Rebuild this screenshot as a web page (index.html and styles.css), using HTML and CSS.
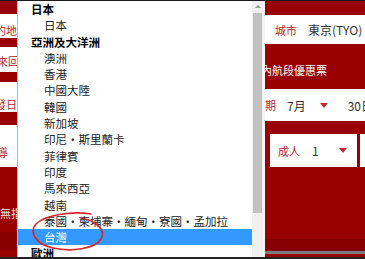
FILE: index.html
```html
<!DOCTYPE html>
<html lang="zh-Hant">
<head>
  <meta charset="UTF-8">
  <title>選擇目的地</title>
  <meta name="viewport" content="width=device-width, initial-scale=1">
  <link rel="stylesheet" href="styles.css">
</head>
<body>

  <div class="screen">

    <div class="side-left">
      <div class="tab tab-a"><span class="tab-text right">目的地</span></div>
      <div class="tab tab-b"><span class="tab-text shift">來回</span></div>
      <div class="tab tab-c"><span class="tab-text right">出發日</span></div>
      <div class="tab tab-d"><span class="tab-text shift">導</span></div>
      <div class="note">無指定</div>
      <div class="band"></div>
    </div>

    <div class="dropdown">
      <ul class="options">
        <li class="group">日本</li>
        <li>日本</li>
        <li class="group">亞洲及大洋洲</li>
        <li>澳洲</li>
        <li>香港</li>
        <li>中國大陸</li>
        <li>韓國</li>
        <li>新加坡</li>
        <li>印尼・斯里蘭卡</li>
        <li>菲律賓</li>
        <li>印度</li>
        <li>馬來西亞</li>
        <li>越南</li>
        <li>泰國・柬埔寨・緬甸・寮國・孟加拉</li>
        <li class="selected">台灣</li>
        <li class="group">歐洲</li>
      </ul>

      <div class="scrollbar">
        <div class="arrow-up"></div>
        <div class="thumb"></div>
      </div>

      <svg class="circle-mark" width="74" height="42" viewBox="0 0 74 42">
        <path d="M60 3 C40 0 14 4 5 13 C-2 21 4 33 22 37 C40 41 64 38 70 28 C75 19 66 10 50 7" fill="none" stroke="#d42a2e" stroke-width="1.7" stroke-linecap="round"/>
      </svg>
    </div>

    <div class="side-right">
      <div class="field field-city">
        <span class="label">城市</span>
        <span class="value">東京(TYO)</span>
      </div>

      <p class="promo">內航段優惠票</p>

      <div class="field field-date">
        <span class="label cut">日期</span>
        <span class="value">7月</span>
        <span class="caret"></span>
        <span class="value day">30日</span>
      </div>

      <div class="field-row">
        <div class="field field-pax">
          <span class="label">成人</span>
          <span class="value">1</span>
          <span class="caret"></span>
        </div>
        <div class="field field-next"></div>
      </div>

      <div class="band"></div>
      <div class="edge"></div>
    </div>

  </div>

</body>
</html>
```

FILE: styles.css
```css
html, body {
  margin: 0;
  padding: 0;
}

body {
  width: 365px;
  height: 259px;
  overflow: hidden;
  background: #990000;
  font-family: "Noto Sans CJK TC", "Liberation Sans", sans-serif;
}

.screen {
  display: flex;
  height: 259px;
  box-sizing: border-box;
  border-top: 1px solid #1b1b1b;
  border-bottom: 2px solid #222;
  position: relative;
}

/* left strip of the booking form, mostly hidden under the list */
.side-left {
  width: 17px;
  flex: none;
  background: #990000;
  display: flex;
  flex-direction: column;
  overflow: hidden;
}

.tab {
  background: #fff;
  overflow: hidden;
  white-space: nowrap;
  font-size: 11px;
  color: #b3262b;
  display: flex;
  align-items: flex-end;
}

.tab-text {
  display: block;
  width: 17px;
  line-height: 14px;
}

.tab-text.right {
  direction: rtl;
  text-align: left;
}

.tab-text.shift {
  text-indent: -3px;
}

.tab-a { margin-top: 13px; height: 24px; padding-bottom: 1px; box-sizing: border-box; }
.tab-b { margin-top: 9px; height: 25px; padding-bottom: 4px; box-sizing: border-box; }
.tab-c { margin-top: 10px; height: 30px; padding-bottom: 1px; box-sizing: border-box; }
.tab-d { margin-top: 13px; height: 42px; padding-bottom: 8px; box-sizing: border-box; }

.note {
  margin-top: 39px;
  font-size: 11px;
  line-height: 14px;
  color: #f4dede;
  white-space: nowrap;
}

.side-left .band {
  margin-top: 12px;
  height: 18px;
  background: #8a0000;
}

/* the open select list */
.dropdown {
  width: 248px;
  flex: none;
  display: flex;
  background: #fff;
  border-left: 1px solid #a9b8c8;
  box-sizing: border-box;
  position: relative;
  overflow: hidden;
}

.options {
  list-style: none;
  margin: 0;
  padding: 0;
  width: 234px;
  flex: none;
  font-size: 11.5px;
  line-height: 16.3px;
  color: #222;
}

.options li {
  padding-left: 26px;
  white-space: nowrap;
}

.options li.group {
  padding-left: 13px;
  font-weight: bold;
  color: #000;
}

.options li.selected {
  background: #3399ff;
  color: #fff;
}

.scrollbar {
  width: 11px;
  flex: none;
  background: #f0f0f0;
  border-right: 2px solid #f6f6f6;
  display: flex;
  flex-direction: column;
  align-items: center;
}

.arrow-up {
  margin-top: 4px;
  width: 0;
  height: 0;
  border-left: 3px solid transparent;
  border-right: 3px solid transparent;
  border-bottom: 3px solid #9a9a9a;
}

.thumb {
  margin-top: 5px;
  width: 9px;
  height: 200px;
  background: #c1c1c1;
}

.circle-mark {
  position: absolute;
  left: 13px;
  top: 210px;
}

/* right part of the booking form */
.side-right {
  flex: 1;
  display: flex;
  flex-direction: column;
  overflow: hidden;
  font-size: 11px;
}

.field {
  background: #fff;
  display: flex;
  align-items: center;
  white-space: nowrap;
}

.label {
  color: #b3262b;
}

.value {
  color: #333;
  font-size: 12px;
}

.field-city {
  margin-top: 14px;
  height: 29px;
  padding-left: 10px;
  gap: 11px;
}

.promo {
  margin: 19px 0 0 0;
  color: #fff;
  font-size: 11px;
  line-height: 14px;
  white-space: nowrap;
  text-indent: -4px;
}

.field-date {
  margin-top: 12px;
  height: 32px;
}

.field-date .label.cut {
  margin-left: -11px;
}

.field-date .value {
  margin-left: 11px;
}

.caret {
  width: 0;
  height: 0;
  border-left: 4px solid transparent;
  border-right: 4px solid transparent;
  border-top: 5px solid #c0282d;
}

.field-date .caret {
  margin-left: 14px;
}

.field-date .day {
  margin-left: 20px;
}

.field-row {
  margin-top: 13px;
  display: flex;
  gap: 3px;
  padding-left: 5px;
}

.field-pax {
  width: 87px;
  height: 33px;
  padding-left: 8px;
  box-sizing: border-box;
}

.field-pax .value {
  margin-left: 12px;
}

.field-pax .caret {
  margin-left: 20px;
}

.field-next {
  flex: 1;
  height: 33px;
}

.side-right .band {
  margin-top: 72px;
  height: 12px;
  background: #870000;
}

.side-right .edge {
  height: 3px;
  background: #7a7a7a;
}
```
